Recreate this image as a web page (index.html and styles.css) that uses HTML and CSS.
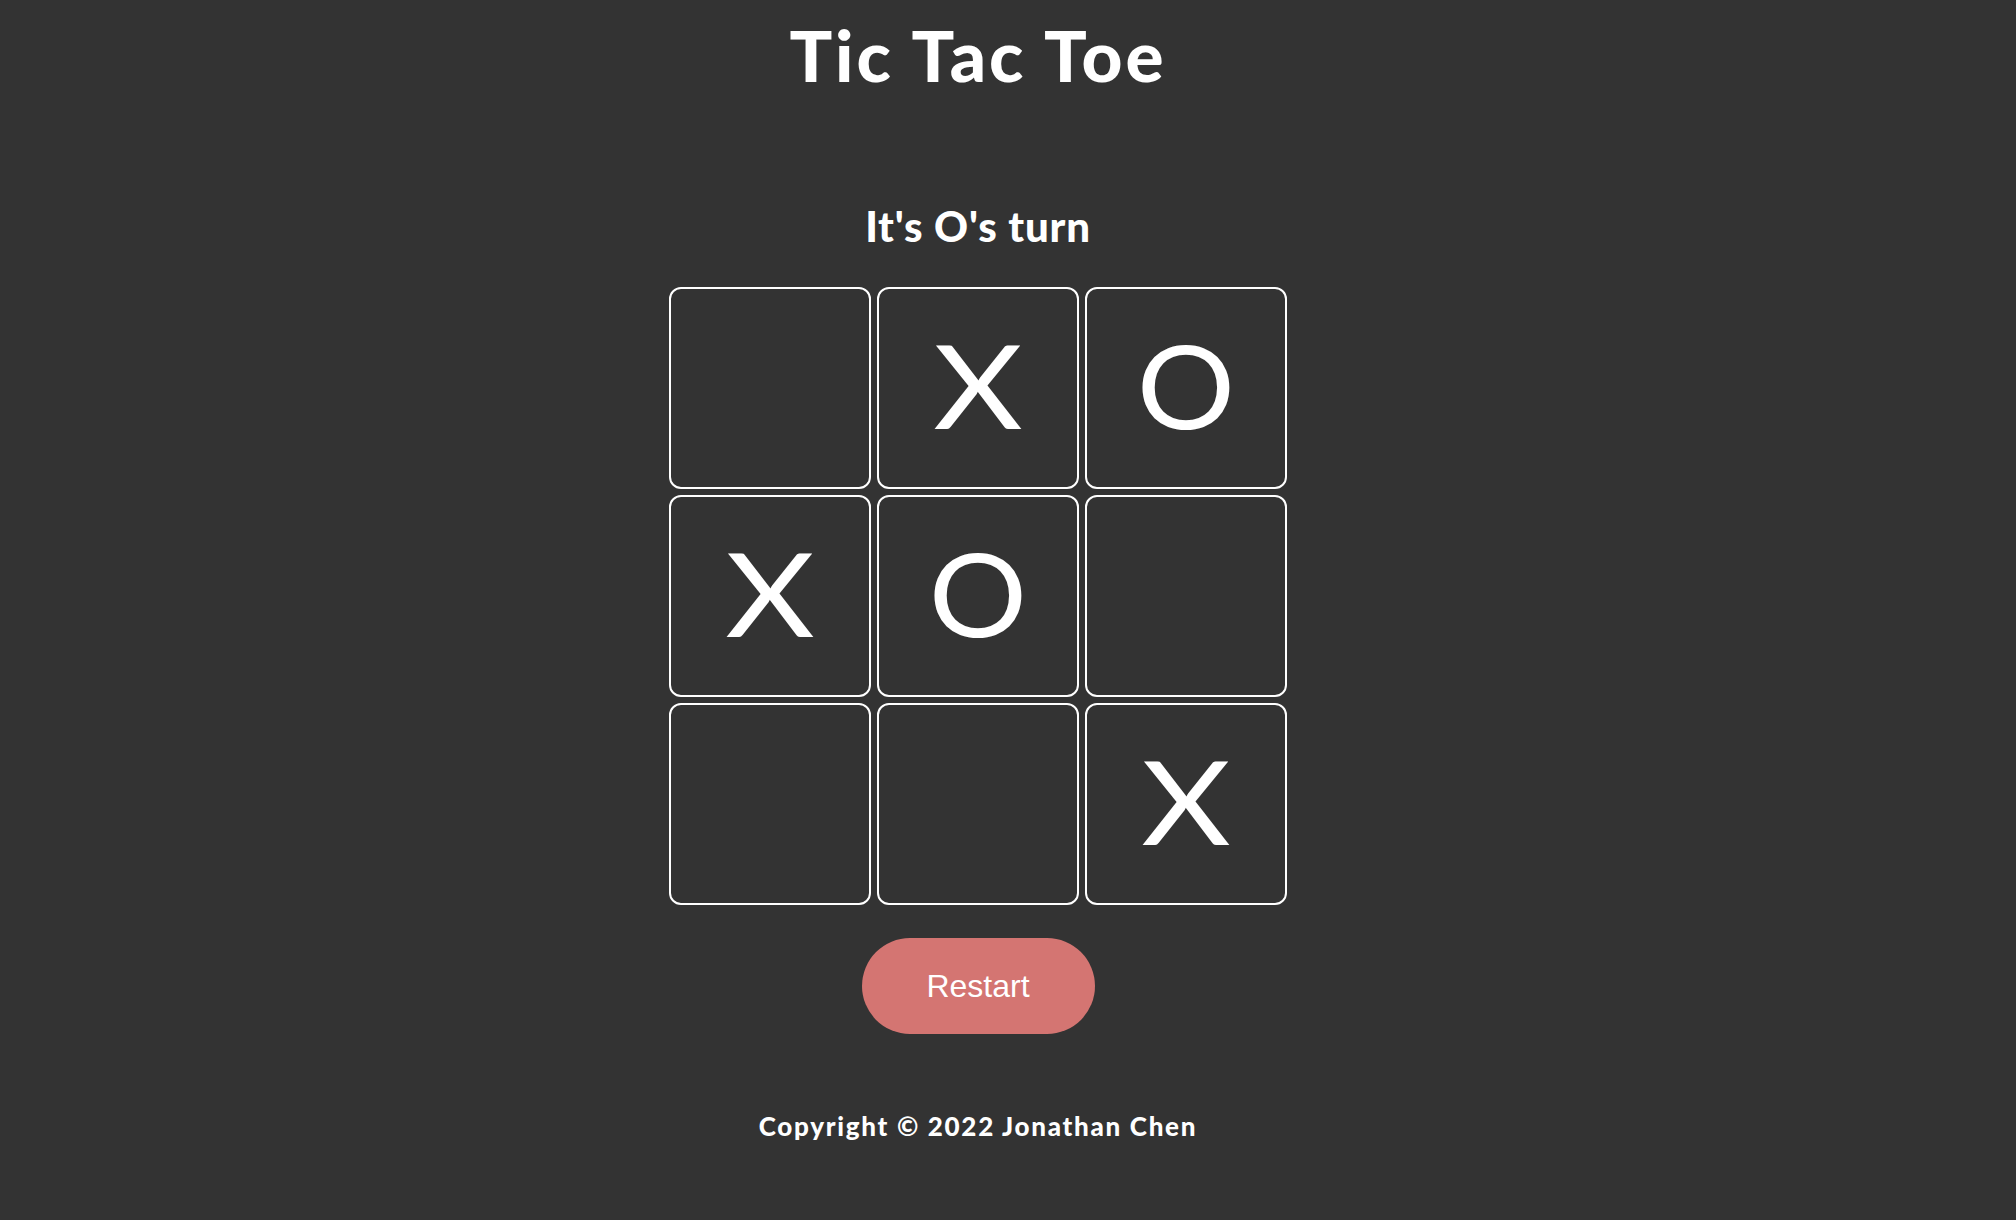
FILE: index.html
```html
<!DOCTYPE html>
<html lang="en">
<head>
<meta charset="utf-8">
<title>Tic Tac Toe</title>
<link rel="stylesheet" href="styles.css">
</head>
<body>
<main class="app">
  <h1 class="title">Tic Tac Toe</h1>
  <h2 class="status">It's O's turn</h2>
  <div class="board">
    <div class="cell"></div>
    <div class="cell"><span class="mark-x">X</span></div>
    <div class="cell"><span class="mark-o">O</span></div>
    <div class="cell"><span class="mark-x">X</span></div>
    <div class="cell"><span class="mark-o">O</span></div>
    <div class="cell"></div>
    <div class="cell"></div>
    <div class="cell"></div>
    <div class="cell"><span class="mark-x">X</span></div>
  </div>
  <button class="restart">Restart</button>
  <footer class="footer">Copyright © 2022 Jonathan Chen</footer>
</main>
</body>
</html>
```

FILE: styles.css
```css
html, body {
  margin: 0;
  padding: 0;
  background: #333333;
  height: 100%;
}
body {
  font-family: Lato, "Open Sans", sans-serif;
  color: #ffffff;
}
.app {
  width: calc(100% - 60px);
  display: flex;
  flex-direction: column;
  align-items: center;
}
.title {
  margin: 20px 0 0;
  font-size: 71px;
  line-height: 70px;
  font-weight: 900;
  letter-spacing: 3px;
}
.status {
  margin: 115px 0 0;
  font-size: 42px;
  line-height: 42px;
  font-weight: 900;
  letter-spacing: 0.8px;
}
.board {
  margin-top: 40px;
  display: grid;
  grid-template-columns: repeat(3, 202px);
  grid-template-rows: repeat(3, 202px);
  gap: 6px;
}
.cell {
  box-sizing: border-box;
  border: 2px solid #ffffff;
  border-radius: 12px;
  padding-bottom: 7px;
  display: flex;
  align-items: center;
  justify-content: center;
  font-size: 117px;
  line-height: 1;
  font-weight: 400;
}
.mark-x {
  display: inline-block;
  transform: scaleX(1.18);
}
.mark-o {
  display: inline-block;
  transform: scaleX(1.05);
}
.restart {
  margin-top: 33px;
  width: 233px;
  height: 96px;
  border: none;
  border-radius: 48px;
  background: #d47572;
  color: #ffffff;
  font-family: "Liberation Sans", Arial, sans-serif;
  font-size: 32px;
}
.footer {
  margin-top: 79px;
  font-size: 26px;
  line-height: 26px;
  font-weight: 900;
  letter-spacing: 1.7px;
}
```
